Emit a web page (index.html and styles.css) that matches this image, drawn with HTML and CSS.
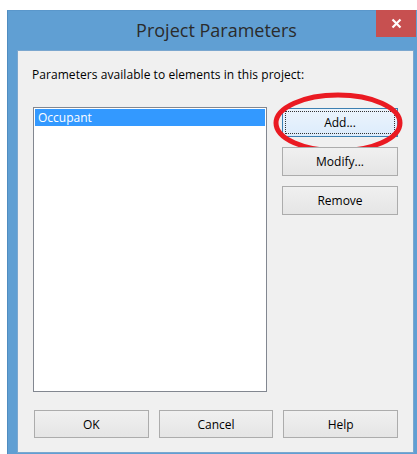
FILE: index.html
```html
<!DOCTYPE html>
<html>
<head>
<meta charset="utf-8">
<title>Project Parameters</title>
<link rel="stylesheet" href="styles.css">
</head>
<body>
<div class="window">
  <div class="titlebar">
    <div class="title">Project Parameters</div>
    <div class="close">
      <svg width="11" height="11" viewBox="0 0 11 11"><path d="M1.5 1.5 L9.5 9.5 M9.5 1.5 L1.5 9.5" stroke="#fff" stroke-width="2.2" fill="none"/></svg>
    </div>
  </div>
  <div class="client">
    <div class="label">Parameters available to elements in this project:</div>
    <div class="main">
      <div class="listbox">
        <div class="item selected">Occupant</div>
      </div>
      <div class="side">
        <div class="btn default"><span class="focus">Add...</span>
          <svg class="mark" width="130" height="62" viewBox="0 0 130 62"><ellipse cx="65" cy="31" rx="62" ry="28" fill="none" stroke="#ea1a22" stroke-width="5"/></svg>
        </div>
        <div class="btn">Modify...</div>
        <div class="btn">Remove</div>
      </div>
    </div>
    <div class="footer">
      <div class="btn">OK</div>
      <div class="btn">Cancel</div>
      <div class="btn">Help</div>
    </div>
  </div>
</div>
</body>
</html>
```
FILE: styles.css
```css
html, body {
  margin: 0;
  padding: 0;
  background: #ffffff;
}

body {
  padding: 10px 0 0 7px;
  font-family: "Open Sans", "Noto Sans", sans-serif;
  font-size: 12px;
  color: #000;
}

.window {
  width: 410px;
  height: 444px;
  box-sizing: border-box;
  background: #609fd3;
  border-left: 1px solid #4f8cc0;
  border-top: 1px solid #5a97cb;
  display: flex;
  flex-direction: column;
  padding: 0 3px 1px 9px;
}

.titlebar {
  height: 39px;
  display: flex;
  position: relative;
  justify-content: center;
  align-items: flex-start;
}

.title {
  font-size: 18px;
  color: #2b2b2b;
  margin-top: 7px;
  padding-left: 2px;
}

.close {
  position: absolute;
  right: -2px;
  top: -1px;
  width: 40px;
  height: 27px;
  background: #c75050;
  display: flex;
  align-items: center;
  justify-content: center;
}

.client {
  flex: 1;
  background: #f0f0f0;
  border: 1px solid #7ba7cf;
  box-sizing: border-box;
  display: flex;
  flex-direction: column;
  padding: 15px 15px 14px 14px;
}

.label {
  height: 19px;
  line-height: 17px;
  letter-spacing: 0.06px;
}

.main {
  display: flex;
  gap: 15px;
  margin-top: 22px;
  padding-left: 1px;
}

.listbox {
  width: 235px;
  height: 285px;
  box-sizing: border-box;
  background: #fff;
  border: 1px solid #828790;
  padding: 1px;
}

.item {
  height: 17px;
  line-height: 17px;
  padding-left: 3px;
}

.item.selected {
  background: #3399ff;
  color: #fff;
}

.side {
  display: flex;
  flex-direction: column;
  gap: 10px;
  margin-top: 1px;
}

.btn {
  width: 116px;
  height: 29px;
  box-sizing: border-box;
  border: 1px solid #acacac;
  background: linear-gradient(#f0f0f0, #e5e5e5);
  display: flex;
  align-items: center;
  justify-content: center;
  position: relative;
}

.btn.default {
  border-color: #3c7fb1;
  background: linear-gradient(#ecf4fc, #dcecfc);
}

.focus {
  position: absolute;
  inset: 2px;
  border: 1px dotted #333;
  display: flex;
  align-items: center;
  justify-content: center;
}

.mark {
  position: absolute;
  left: -10px;
  top: -17px;
  pointer-events: none;
}

.footer {
  display: flex;
  gap: 10px;
  margin-top: auto;
  padding-left: 2px;
}

.footer .btn {
  width: 115px;
  height: 28px;
}
```
